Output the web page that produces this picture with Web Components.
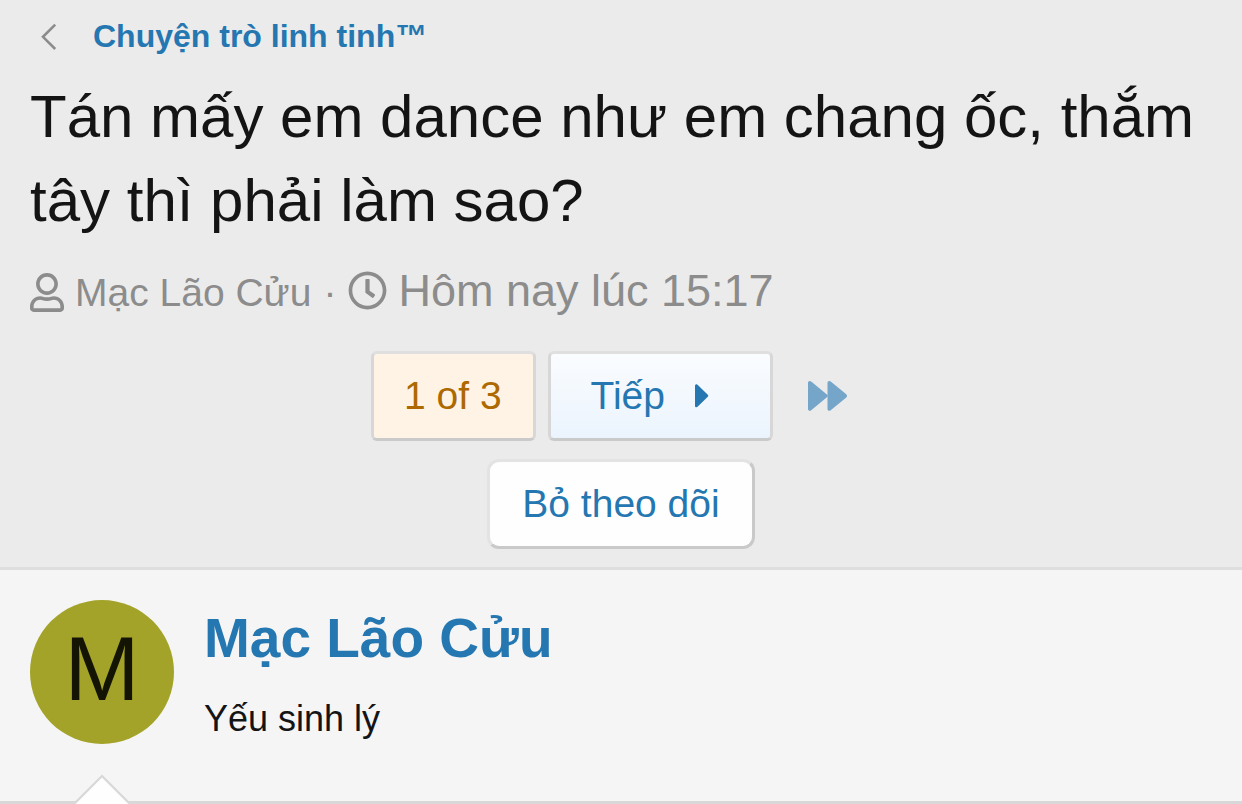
<!DOCTYPE html>
<html lang="vi">
<head>
<meta charset="utf-8">
<meta name="viewport" content="width=device-width, initial-scale=1">
<title>Tán mấy em dance như em chang ốc, thắm tây thì phải làm sao?</title>
<style>
  body {
    margin: 0;
    background: #fefefe;
    color: #141414;
    font-family: "Liberation Sans", Arial, sans-serif;
    --link: #2577b1;
    --muted: #8c8c8c;
  }
</style>
</head>
<body>
<thread-page></thread-page>

<script>
const define = (name, html) => {
  const template = document.createElement('template');
  template.innerHTML = html;
  customElements.define(name, class extends HTMLElement {
    constructor() {
      super();
      this.attachShadow({ mode: 'open' }).append(template.content.cloneNode(true));
    }
  });
};

define('crumb-link', `
  <style>
    :host { display: flex; height: 48px; }
    a { display: flex; align-items: center; gap: 36px; padding-left: 11px;
        color: var(--link); font-size: 32px; font-weight: 700; line-height: 48px; text-decoration: none; }
    svg { width: 16px; height: 28px; flex: none; }
  </style>
  <a href="#forum">
    <svg viewBox="0 0 16 28" aria-hidden="true"><path d="M14.2 2.600L2 14.800 14.200 27" fill="none" stroke="#8c8c8c" stroke-width="2.600"/></svg>
    <slot></slot>
  </a>`);

define('thread-title', `
  <style>
    :host { display: block; margin-top: 15px; }
    h1 { margin: 0; font-size: 60px; font-weight: 400; line-height: 84px; }
  </style>
  <h1><slot></slot></h1>`);

define('thread-meta', `
  <style>
    :host { display: flex; align-items: baseline; margin-top: 16px; color: var(--muted); font-size: 39px; line-height: 63px; }
    .part { display: flex; align-items: baseline; gap: 11px; color: inherit; text-decoration: none; }
    svg { height: 39px; flex: none; align-self: center; fill: currentColor; }
    .user { width: 34px; }
    .clock { width: 39px; }
    .dot { padding: 0 12px; }
    time { font-size: 45px; }
  </style>
  <a class="part" href="#member">
    <svg class="user" viewBox="0 0 448 512" aria-hidden="true"><path d="M313.6 304c-28.7 0-42.5 16-89.6 16-47.1 0-60.8-16-89.6-16C60.2 304 0 364.2 0 438.4V464c0 26.5 21.5 48 48 48h352c26.5 0 48-21.5 48-48v-25.6c0-74.2-60.2-134.4-134.4-134.4zM400 464H48v-25.6c0-47.6 38.8-86.4 86.4-86.4 14.6 0 38.3 16 89.6 16 51.7 0 74.9-16 89.6-16 47.6 0 86.4 38.8 86.4 86.4V464zM224 288c79.5 0 144-64.5 144-144S303.5 0 224 0 80 64.5 80 144s64.5 144 144 144zm0-240c52.9 0 96 43.1 96 96s-43.1 96-96 96-96-43.1-96-96 43.1-96 96-96z"/></svg>
    <slot name="author"></slot>
  </a>
  <span class="dot">·</span>
  <a class="part" href="#first-post">
    <svg class="clock" viewBox="0 0 512 512" aria-hidden="true"><path d="M256 8C119 8 8 119 8 256s111 248 248 248 248-111 248-248S393 8 256 8zm0 448c-110.5 0-200-89.5-200-200S145.5 56 256 56s200 89.5 200 200-89.5 200-200 200zm61.8-104.4l-84.9-61.7c-3.1-2.3-4.9-5.9-4.9-9.7V116c0-6.6 5.4-12 12-12h32c6.6 0 12 5.4 12 12v141.7l66.8 48.6c5.4 3.9 6.5 11.4 2.6 16.8L334.6 349c-3.9 5.3-11.4 6.5-16.8 2.6z"/></svg>
    <time><slot name="date"></slot></time>
  </a>`);

define('page-nav', `
  <style>
    :host { display: flex; justify-content: center; gap: 12px; margin-top: 27px; font-size: 39px; line-height: 84px; }
    a { display: flex; align-items: center; box-sizing: border-box; height: 90px; text-decoration: none; color: var(--link); }
    .box { border: 3px solid #d7d7d7; border-top-color: #dfdfdf; border-bottom-color: #cacaca; border-radius: 6px; }
    .current { padding: 0 31px 0 30px; color: #ad6800; background: #fff3e5; }
    .next { padding: 0 61px 0 40px; gap: 30px; background: linear-gradient(#fafcff, #ebf4fd); }
    .last { padding: 0 24px 0 23px; }
    svg { fill: var(--link); flex: none; }
    .last svg { fill: #76a5ca; }
  </style>
  <a class="box current" href="#pages">1 of 3</a>
  <a class="box next" href="#page-2">Tiếp
    <svg width="14" height="24" viewBox="0 0 14 24" aria-hidden="true"><path d="M0 2C0 .3 1.7-.2 2.8.9L12.8 10.700q.9 1 0 2L2.800 22.600C1.700 23.700 0 23.300 0 21.700Z"/></svg>
  </a>
  <a class="last" href="#page-3" aria-label="Trang cuối">
    <svg width="39" height="30" viewBox="0 0 39 30" aria-hidden="true"><path d="M0 2C0 .2 1.800-.5 3.200.6L18.300 13.100Q19.300 13.900 19.500 14.700V2C19.500.2 21.300-.5 22.700.6L38 13.100Q40 15 38 16.700L22.700 29.300C21.300 30.400 19.500 29.700 19.500 28V15.100Q19.300 16 18.300 16.800L3.200 29.300C1.800 30.400 0 29.700 0 28Z"/></svg>
  </a>`);

define('watch-button', `
  <style>
    :host { display: flex; justify-content: center; margin-top: 18px; }
    button { box-sizing: border-box; height: 90px; margin: 0; padding: 0 32px; color: var(--link); background: #fefefe;
             border: 3px solid; border-color: #e3e3e3 #c9c9c9 #c9c9c9 #e3e3e3; border-radius: 12px;
             font-family: inherit; font-size: 39px; line-height: 84px; cursor: pointer; }
  </style>
  <button type="button"><slot></slot></button>`);

define('thread-header', `
  <style>
    :host { display: block; padding: 12px 30px 18px; background: #ebebeb; border-bottom: 3px solid #dedede; }
  </style>
  <slot></slot>`);

define('letter-avatar', `
  <style>
    :host { display: block; flex: none; }
    a { display: block; width: 144px; height: 144px; border-radius: 50%; background: #a3a329; color: #141405;
        font-size: 90px; line-height: 138px; text-align: center; text-decoration: none; }
  </style>
  <a href="#member"><slot></slot></a>`);

define('post-author', `
  <style>
    :host { position: relative; display: flex; gap: 30px; padding: 30px 30px 57px; background: #f5f5f5; border-bottom: 3px solid #d8d8d8; }
    h2 { margin: 0; font-size: 55px; line-height: 76px; }
    h2 a { color: var(--link); text-decoration: none; }
    p { margin: 18px 0 0; font-size: 36px; line-height: 50px; }
    .notch { position: absolute; left: 72px; bottom: -3px; width: 60px; height: 30px; }
  </style>
  <letter-avatar>M</letter-avatar>
  <div>
    <h2><a href="#member"><slot name="name"></slot></a></h2>
    <p><slot name="rank"></slot></p>
  </div>
  <svg class="notch" viewBox="0 0 60 30" aria-hidden="true"><path d="M1 31L30 2 59 31" fill="#fefefe" stroke="#d8d8d8" stroke-width="2.200"/></svg>`);

define('thread-page', `
  <style>:host { display: block; }</style>
  <main>
    <thread-header>
      <crumb-link>Chuyện trò linh tinh™</crumb-link>
      <thread-title>Tán mấy em dance như em chang ốc, thắm tây thì phải làm sao?</thread-title>
      <thread-meta><span slot="author">Mạc Lão Cửu</span><span slot="date">Hôm nay lúc 15:17</span></thread-meta>
      <page-nav></page-nav>
      <watch-button>Bỏ theo dõi</watch-button>
    </thread-header>
    <post-author><span slot="name">Mạc Lão Cửu</span><span slot="rank">Yếu sinh lý</span></post-author>
  </main>`);
</script>
</body>
</html>
